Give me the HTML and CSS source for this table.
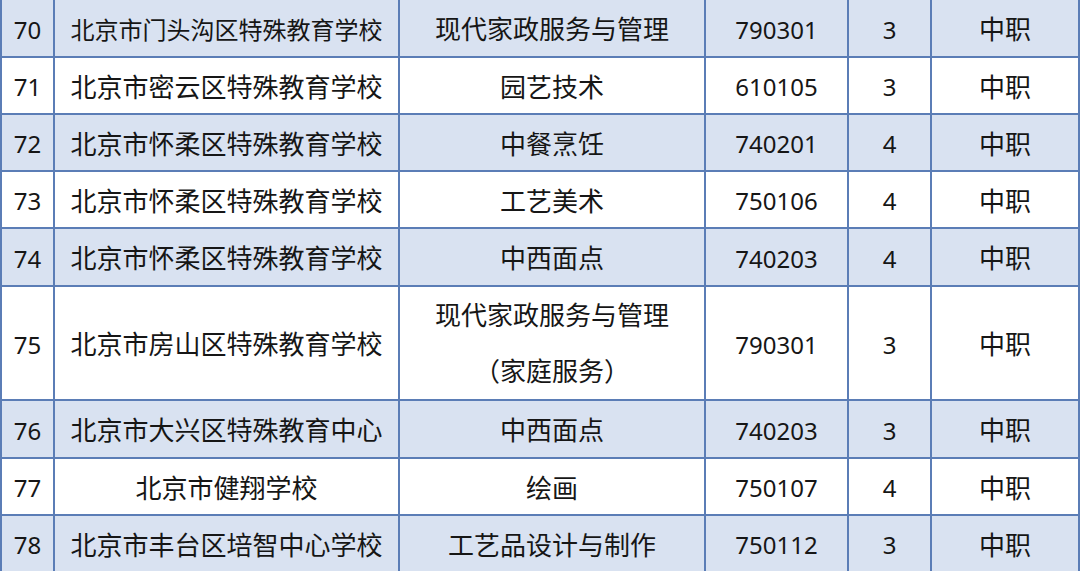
FILE: index.html
```html
<!DOCTYPE html>
<html lang="zh">
<head>
<meta charset="utf-8">
<link rel="stylesheet" href="styles.css">
</head>
<body>
<table class="grid">
  <colgroup>
    <col class="c-no"><col class="c-school"><col class="c-major"><col class="c-code"><col class="c-years"><col class="c-level">
  </colgroup>
  <tbody>
    <tr class="shade first"><td>70</td><td class="zh long">北京市门头沟区特殊教育学校</td><td class="zh">现代家政服务与管理</td><td>790301</td><td>3</td><td class="zh">中职</td></tr>
    <tr><td>71</td><td class="zh">北京市密云区特殊教育学校</td><td class="zh">园艺技术</td><td>610105</td><td>3</td><td class="zh">中职</td></tr>
    <tr class="shade"><td>72</td><td class="zh">北京市怀柔区特殊教育学校</td><td class="zh">中餐烹饪</td><td>740201</td><td>4</td><td class="zh">中职</td></tr>
    <tr><td>73</td><td class="zh">北京市怀柔区特殊教育学校</td><td class="zh">工艺美术</td><td>750106</td><td>4</td><td class="zh">中职</td></tr>
    <tr class="shade r58"><td>74</td><td class="zh">北京市怀柔区特殊教育学校</td><td class="zh">中西面点</td><td>740203</td><td>4</td><td class="zh">中职</td></tr>
    <tr class="tall"><td>75</td><td class="zh">北京市房山区特殊教育学校</td><td class="zh two">现代家政服务与管理<br>（家庭服务）</td><td>790301</td><td>3</td><td class="zh">中职</td></tr>
    <tr class="shade r58"><td>76</td><td class="zh">北京市大兴区特殊教育中心</td><td class="zh">中西面点</td><td>740203</td><td>3</td><td class="zh">中职</td></tr>
    <tr><td>77</td><td class="zh">北京市健翔学校</td><td class="zh">绘画</td><td>750107</td><td>4</td><td class="zh">中职</td></tr>
    <tr class="shade"><td>78</td><td class="zh">北京市丰台区培智中心学校</td><td class="zh">工艺品设计与制作</td><td>750112</td><td>3</td><td class="zh">中职</td></tr>
  </tbody>
</table>
</body>
</html>
```
FILE: styles.css
```css
html, body {
  margin: 0;
  padding: 0;
  background: #ffffff;
}
.grid {
  border-collapse: collapse;
  table-layout: fixed;
  width: 1078px;
  font-family: "Noto Sans", "Noto Sans CJK SC", sans-serif;
  font-size: 24px;
  color: #161616;
}
.c-no { width: 53px; }
.c-school { width: 345px; }
.c-major { width: 306px; }
.c-code { width: 143px; }
.c-years { width: 83px; }
.c-level { width: 148px; }
.grid td {
  border: 2px solid #5b7db6;
  text-align: center;
  vertical-align: middle;
  padding: 3px 0 0 0;
  white-space: nowrap;
  line-height: 30px;
}
.grid td.zh {
  font-size: 26px;
  padding-top: 2px;
}
.grid td.zh.long {
  font-size: 24px;
  padding-top: 3px;
}
.grid tr { height: 57px; }
.grid tr.r58 { height: 58px; }
.grid tr.tall { height: 112px; }
.grid tr.first td { border-top: none; }
.grid tr.shade td { background: #d9e2f1; }
.grid td.two { line-height: 56px; padding-top: 0; }
```
